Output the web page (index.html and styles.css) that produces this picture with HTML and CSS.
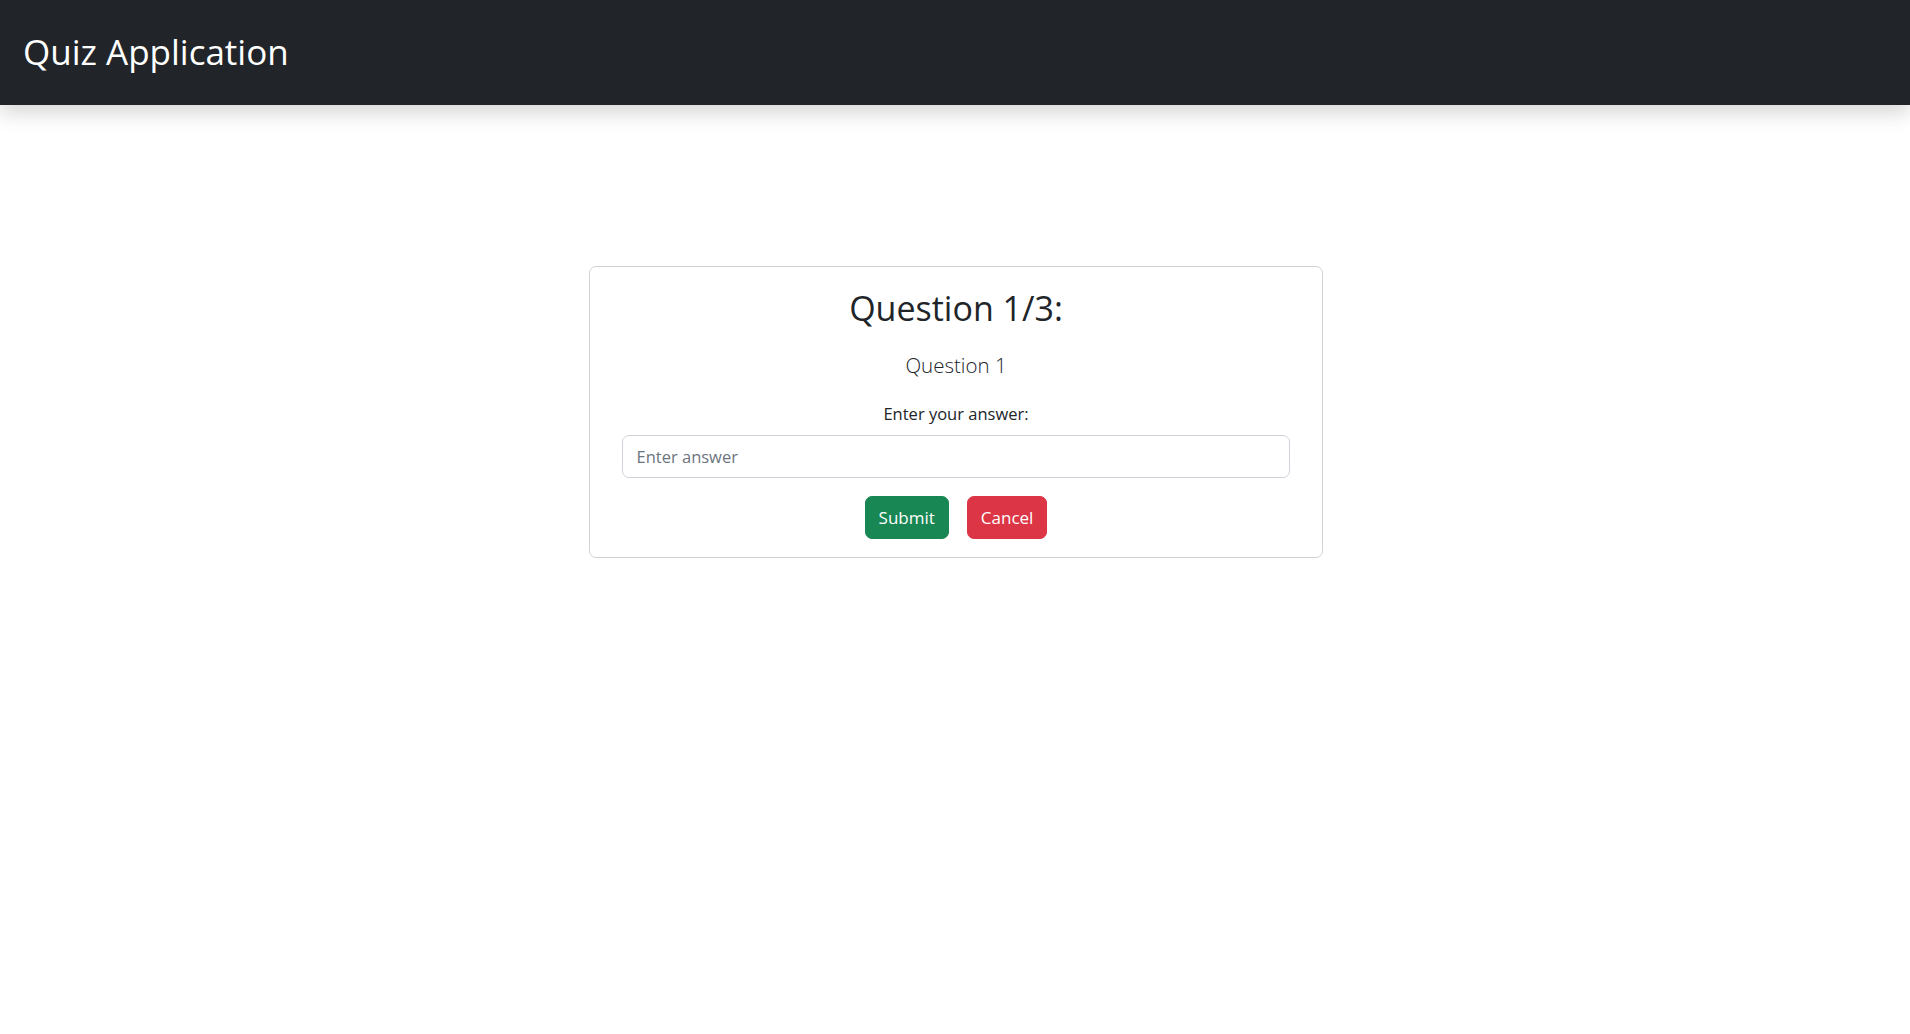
FILE: index.html
```html
<!DOCTYPE html>
<html lang="en">
<head>
<meta charset="utf-8">
<title>Quiz Application</title>
<link rel="stylesheet" href="styles.css">
</head>
<body>
<header class="navbar">
  <span class="brand">Quiz Application</span>
</header>
<main class="main">
  <section class="card">
    <h2 class="title">Question 1/3:</h2>
    <p class="lead">Question 1</p>
    <label class="label" for="answer">Enter your answer:</label>
    <input class="input" id="answer" type="text" placeholder="Enter answer">
    <div class="actions">
      <button class="btn btn-success" type="button">Submit</button>
      <button class="btn btn-danger" type="button">Cancel</button>
    </div>
  </section>
</main>
</body>
</html>
```

FILE: styles.css
```css
* { box-sizing: border-box; }
html, body { margin: 0; padding: 0; }
body {
  font-family: "Open Sans", "Noto Sans", "Liberation Sans", sans-serif;
  font-size: 18px;
  color: #212529;
  background: #fff;
}
.navbar {
  height: 105px;
  background: #212529;
  box-shadow: 0 9px 18px rgba(0,0,0,.15);
  display: flex;
  align-items: center;
  padding: 0 23px 2px;
  position: relative;
  z-index: 1;
}
.brand {
  color: #fff;
  font-size: 35px;
  line-height: 1;
  font-weight: 400;
}
.main {
  display: flex;
  justify-content: center;
  padding-top: 161px;
}
.card {
  width: 734px;
  margin-left: 2px;
  border: 1px solid rgba(0,0,0,.175);
  border-radius: 7px;
  padding: 20px 32px 18px;
  display: flex;
  flex-direction: column;
  align-items: stretch;
  text-align: center;
}
.title {
  margin: 0 0 18px;
  font-size: 34px;
  font-weight: 500;
  line-height: 43px;
}
.lead {
  margin: 0 0 18px;
  font-size: 20.5px;
  font-weight: 300;
  line-height: 34px;
}
.label {
  display: block;
  font-size: 16.5px;
  line-height: 27px;
  margin-bottom: 8px;
}
.input {
  height: 43px;
  width: 100%;
  border: 1px solid #ced4da;
  border-radius: 7px;
  padding: 0 13.5px;
  font-family: inherit;
  font-size: 16.5px;
  color: #212529;
  background: #fff;
  margin: 0 0 18px;
}
.input::placeholder { color: #6c757d; opacity: 1; }
.actions {
  display: flex;
  justify-content: center;
  gap: 18px;
}
.btn {
  height: 43px;
  padding: 0 13px;
  border: 1px solid transparent;
  border-radius: 7px;
  font-family: inherit;
  font-size: 17px;
  color: #fff;
  cursor: pointer;
}
.btn-success { background: #198754; border-color: #198754; }
.btn-danger { background: #dc3545; border-color: #dc3545; }
```
